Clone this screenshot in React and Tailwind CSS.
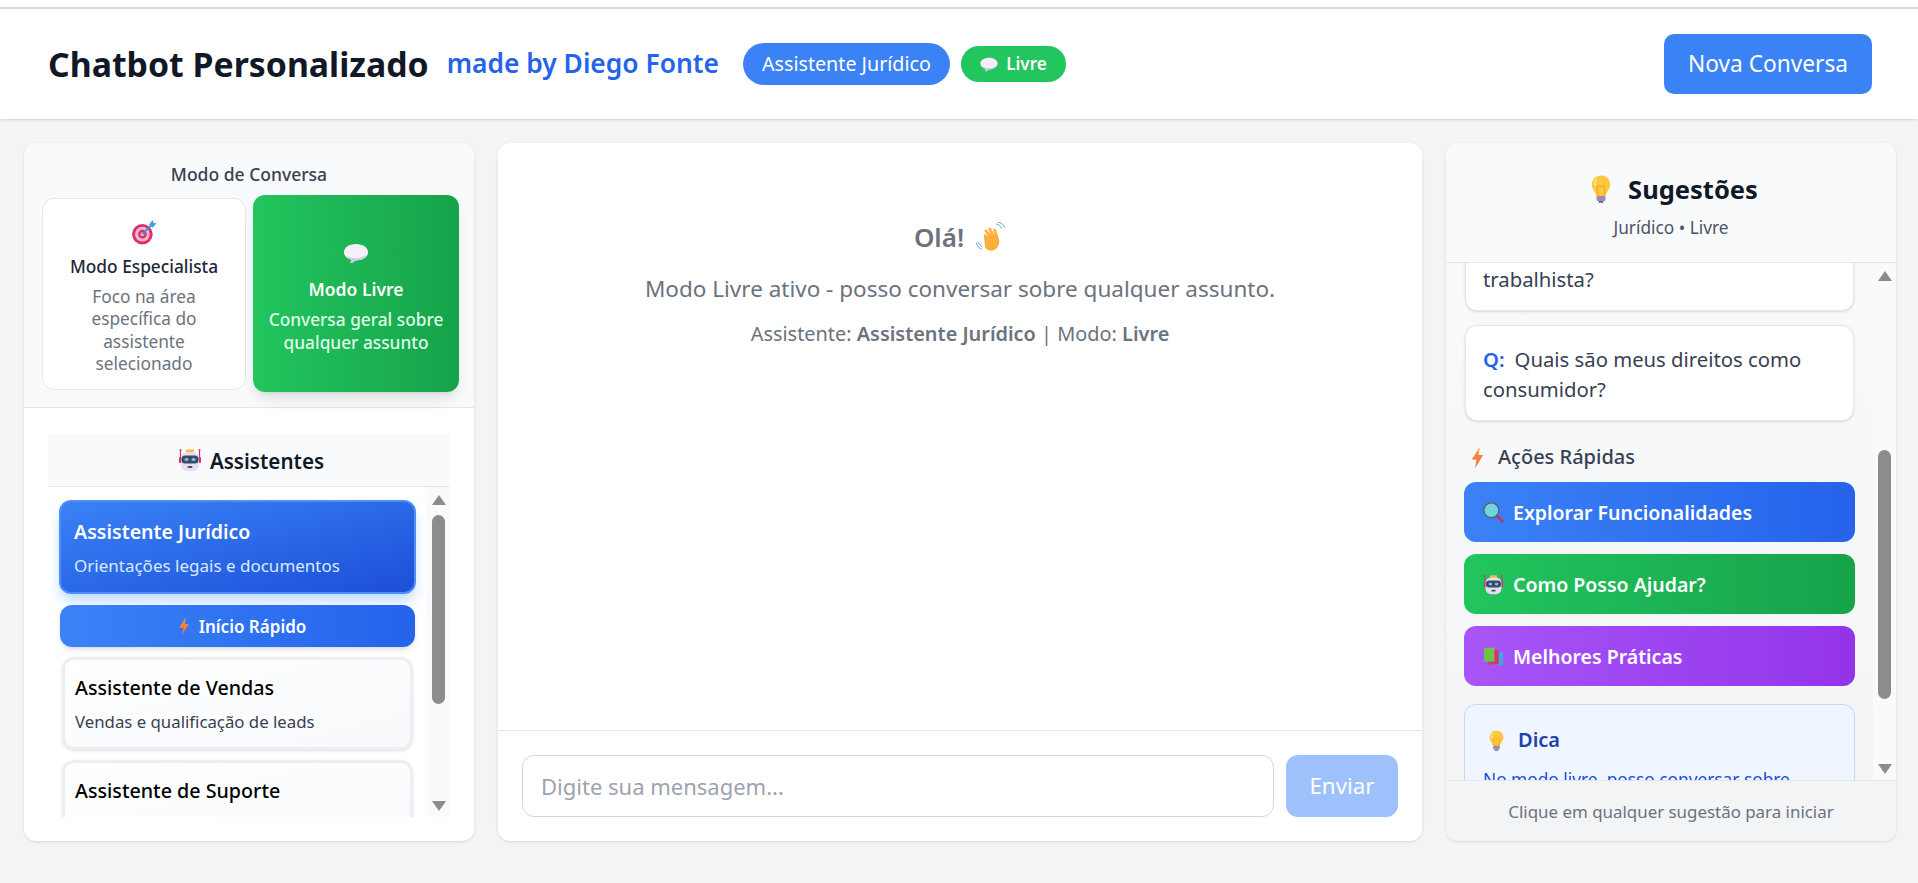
import React from 'react';

const FONT = "font-['Noto_Sans','Open_Sans',sans-serif]";

const Target = ({ className }) => (
  <svg viewBox="0 0 24 24" className={className}>
    <circle cx="10.5" cy="14" r="9.5" fill="#d6336c" />
    <circle cx="10.5" cy="14" r="6.8" fill="#f3b6cc" />
    <circle cx="10.5" cy="14" r="4" fill="#d6336c" />
    <circle cx="10.5" cy="14" r="1.8" fill="#f3b6cc" />
    <path d="M10.5 14 19 5.5" stroke="#3d8fd9" strokeWidth="1.6" />
    <path d="M16.5 5 20 1l.8 2.6L23.6 4 20 8z" fill="#3fa3ea" />
  </svg>
);

const Bubble = ({ className }) => (
  <svg viewBox="0 0 24 20" className={className}>
    <path d="M12 1C5.5 1 .5 4.4.5 8.8c0 3.3 2.8 6 6.8 7.1.3 1.200-.1 2.300-.9 3.100 2.200 0 4-1 5-2.400h.6c6.500 0 11.500-3.400 11.500-7.800S18.500 1 12 1z" fill="#f4eff8" />
    <path d="M3 12c3 3 12 4.500 19-.5-2 3.500-6 5-10 5-1 1.400-3 2.400-5.500 2.400.8-.8 1.200-1.900.9-3.100C5.500 15.300 4 14 3 12z" fill="#d3c3e6" />
  </svg>
);

const Robot = ({ className }) => (
  <svg viewBox="0 0 24 24" className={className}>
    <path d="M2.500 2v8M21.500 2v8" stroke="#d6336c" strokeWidth="1.200" />
    <circle cx="2.500" cy="2" r="1" fill="#d6336c" />
    <circle cx="21.500" cy="2" r="1" fill="#d6336c" />
    <rect x="8" y="1.500" width="8" height="3" rx="1" fill="#f5b83d" />
    <rect x="1" y="9" width="3" height="6" rx="1" fill="#d6336c" />
    <rect x="20" y="9" width="3" height="6" rx="1" fill="#d6336c" />
    <rect x="3" y="4" width="18" height="19" rx="6" fill="#eadcf0" />
    <rect x="3.500" y="7.500" width="17" height="8" rx="3.500" fill="#3a4a63" />
    <rect x="6.500" y="10" width="4" height="3" rx="1.500" fill="#63c3f5" />
    <rect x="13.500" y="10" width="4" height="3" rx="1.500" fill="#63c3f5" />
    <rect x="9.500" y="18" width="5" height="2" rx="1" fill="#4b5563" />
  </svg>
);

const Bolt = ({ className }) => (
  <svg viewBox="0 0 12 22" className={className}>
    <defs>
      <linearGradient id="bolt" x1="0" y1="0" x2="0" y2="1">
        <stop offset="0" stopColor="#f9a03c" />
        <stop offset="1" stopColor="#f0603a" />
      </linearGradient>
    </defs>
    <path d="M8.500 0 0 13h5L3.500 22 12 8.500H7z" fill="url(#bolt)" />
  </svg>
);

const Bulb = ({ className }) => (
  <svg viewBox="0 0 20 28" className={className}>
    <path d="M10 .5C4.700.5.800 4.400.800 9.500c0 5 3.700 6.800 4.700 12h9c1-5.200 4.700-7 4.700-12C19.200 4.400 15.300.5 10 .5z" fill="#fdc83f" />
    <path d="M5.500 3.500c-2 2-2.500 5-1 7" stroke="#ffe79a" strokeWidth="1.500" fill="none" />
    <path d="M7 21 6 12l2-1.500L10 12l2-1.500 2 1.500-1 9" stroke="#e59a1c" strokeWidth=".8" fill="none" />
    <rect x="5.500" y="21" width="9" height="5" rx="1.500" fill="#9d8bb5" />
    <rect x="7.500" y="26" width="5" height="1.800" rx=".9" fill="#6d5c85" />
  </svg>
);

const Wave = ({ className }) => (
  <svg viewBox="0 0 30 30" className={className}>
    <path d="M8 14.500c-1-1.500 1-3 2.300-1.600L13 16 8.800 9.500c-1-1.600 1.200-3 2.300-1.500l4 5.500-2.600-6c-.8-1.700 1.500-2.800 2.500-1.200l3.600 6.700-1.200-4.500c-.4-1.700 2-2.300 2.600-.7l2.700 8.500c1.300 4.500.2 8-2.700 10.500-4 3.400-8.500 2-11-1.500z" fill="#fbb03b" />
    <path d="M20 2c2.500.3 4.500 2 5.500 4.500M22 0c3 .5 5.500 2.500 6.500 5.500M2.500 20c.7 2.200 2 3.800 4 5M0 20.500c.8 3 3 5.500 5.500 6.500" stroke="#5aa5d6" strokeWidth="1" fill="none" />
  </svg>
);

const Magnifier = ({ className }) => (
  <svg viewBox="0 0 24 24" className={className}>
    <path d="M15 15l7 7" stroke="#b5386f" strokeWidth="3.500" strokeLinecap="round" />
    <circle cx="9.500" cy="9.500" r="8.500" fill="#6fd6e0" stroke="#556070" strokeWidth="1.500" />
  </svg>
);

const Books = ({ className }) => (
  <svg viewBox="0 0 24 24" className={className}>
    <rect x="12" y="7" width="11" height="15" fill="#3fa3ea" />
    <rect x="6" y="5" width="12" height="16" fill="#d6336c" />
    <rect x="1" y="2" width="12" height="16" fill="#6cc24a" />
  </svg>
);

const ScrollTrack = ({ thumbClass, upClass, downClass }) => (
  <div className="absolute top-0 right-0 bottom-0 w-[23px] bg-[#fafafa]">
    <div className={`absolute left-[5px] w-[13px] rounded-full bg-[#8c8c8c] ${thumbClass}`} />
    <div className={`absolute left-[5px] w-0 h-0 border-x-[7px] border-x-transparent border-b-[10px] border-b-[#8c8c8c] ${upClass}`} />
    <div className={`absolute left-[5px] w-0 h-0 border-x-[7px] border-x-transparent border-t-[10px] border-t-[#8c8c8c] ${downClass}`} />
  </div>
);

const AssistantCard = ({ title, desc }) => (
  <div className="mx-[3px] h-[93px] shrink-0 rounded-[12px] border-[3px] border-[#eceef1] bg-linear-to-br from-white to-[#f8f9fb] px-[10px] pt-[13px] shadow-sm">
    <div className="text-[19.700px] leading-[30px] font-medium text-black">{title}</div>
    <div className="mt-[6px] text-[16.800px] leading-[26px] text-[#374151]">{desc}</div>
  </div>
);

const ActionButton = ({ icon, label, colors }) => (
  <button type="button" className={`flex h-[60px] w-full items-center gap-[9px] rounded-[12px] pl-[19px] text-[19.500px] font-semibold text-white ${colors}`}>
    {icon}
    <span className="mt-[2px]">{label}</span>
  </button>
);

const QuestionCard = ({ className, children }) => (
  <div className={`h-[96px] rounded-[12px] border border-[#e5e7eb] bg-white px-[17px] pt-[18px] text-[20.300px] leading-[30px] text-[#374151] shadow-sm ${className}`}>
    <span className="mr-[10px] font-semibold text-[#2563eb]">Q:</span>
    {children}
  </div>
);

const App = () => {
  return (
    <div className={`flex h-[883px] flex-col overflow-hidden bg-[#f3f4f6] ${FONT}`}>
      <div className="h-[9px] shrink-0 border-b-2 border-[#dcdde0] bg-white" />

      <header className="flex h-[110px] shrink-0 items-center bg-white pr-[46px] pl-[48px] shadow-sm">
        <h1 className="text-[33.800px] font-bold text-[#111827]">Chatbot Personalizado</h1>
        <span className="ml-[18px] text-[26.400px] font-semibold text-[#2563eb]">made by Diego Fonte</span>
        <span className="ml-[24px] flex h-[42px] w-[207px] items-center justify-center rounded-full bg-[#3b82f6] text-[19.700px] text-white">
          Assistente Jurídico
        </span>
        <span className="ml-[11px] flex h-[36px] w-[105px] items-center justify-center gap-[8px] rounded-full bg-[#22c55e] text-[17px] font-semibold text-white">
          <Bubble className="h-[15px] w-[18px]" />
          Livre
        </span>
        <button type="button" className="ml-auto h-[60px] w-[208px] rounded-[10px] bg-[#3b82f6] text-[22.700px] text-white">
          Nova Conversa
        </button>
      </header>

      <main className="mt-[24px] flex h-[698px] gap-6 pr-[22px] pl-6">
        <aside className="flex w-[450px] flex-col overflow-hidden rounded-[12px] bg-white shadow-sm">
          <section className="h-[265px] shrink-0 border-b border-[#e5e7eb] bg-[#f9fafb] pt-[19px]">
            <div className="text-center text-[17.500px] leading-[24px] font-medium text-[#374151]">Modo de Conversa</div>
            <div className="mt-[9px] flex items-center pr-[15px] pl-[18px]">
              <div className="flex h-[192px] w-[204px] flex-col items-center rounded-[12px] border border-[#e5e7eb] bg-white pt-[20px] text-center">
                <Target className="h-[26px] w-[26px]" />
                <div className="mt-[9px] text-[17.300px] leading-[26px] font-medium text-[#1f2937]">Modo Especialista</div>
                <div className="mt-[6px] w-[170px] text-[17.300px] leading-[22.500px] text-[#6b7280]">
                  Foco na área específica do assistente selecionado
                </div>
              </div>
              <div className="ml-[7px] flex h-[197px] w-[206px] flex-col items-center rounded-[12px] bg-linear-to-r from-[#22c55e] to-[#16a34a] pt-[48px] text-center shadow-lg">
                <Bubble className="h-[21px] w-[26px]" />
                <div className="mt-[12px] text-[17.500px] leading-[26px] font-semibold text-white">Modo Livre</div>
                <div className="mt-[6px] text-[17.300px] leading-[23px] font-medium text-[#dcfce7]">
                  Conversa geral sobre qualquer assunto
                </div>
              </div>
            </div>
          </section>

          <section className="mx-auto mt-[25px] flex h-[384px] w-[402px] flex-col overflow-hidden">
            <div className="flex h-[54px] shrink-0 items-center justify-center gap-[8px] border-b border-[#e5e7eb] bg-[#f9fafb] pl-[4px] text-[20.600px] font-semibold text-[#111827]">
              <Robot className="h-[24px] w-[24px]" />
              <span className="mt-[3px]">Assistentes</span>
            </div>
            <div className="relative flex-1 overflow-hidden">
              <div className="flex w-[379px] flex-col pt-[13px] pr-[11px] pl-[11px]">
                <div className="h-[94px] shrink-0 rounded-[12px] border-2 border-[#4d8ff7] bg-linear-to-br from-[#3b82f6] to-[#1d4ed8] px-[13px] pt-[15px] shadow-lg shadow-blue-200">
                  <div className="text-[19.600px] leading-[30px] font-semibold text-white">Assistente Jurídico</div>
                  <div className="mt-[6px] text-[17px] leading-[26px] text-[#dbeafe]">Orientações legais e documentos</div>
                </div>
                <button type="button" className="mx-px mt-[11px] flex h-[42px] shrink-0 items-center justify-center gap-[10px] rounded-[12px] bg-linear-to-r from-[#3b82f6] to-[#2563eb] pl-[10px] text-[17px] font-semibold text-white shadow-md">
                  <Bolt className="h-[18px] w-[10px]" />
                  <span className="mt-[2px]">Início Rápido</span>
                </button>
                <div className="mt-[10px] flex flex-col gap-[10px]">
                  <AssistantCard title="Assistente de Vendas" desc="Vendas e qualificação de leads" />
                  <AssistantCard title="Assistente de Suporte" desc="Suporte técnico e atendimento" />
                </div>
              </div>
              <ScrollTrack thumbClass="top-[28px] h-[189px]" upClass="top-[8px]" downClass="top-[314px]" />
            </div>
          </section>
        </aside>

        <section className="flex flex-1 flex-col overflow-hidden rounded-[12px] bg-white shadow-sm">
          <div className="flex-1 pt-[76px] text-center text-[#6b7280]">
            <div className="flex items-center justify-center gap-[12px] text-[26px] leading-[36px] font-semibold">
              Olá!
              <Wave className="h-[30px] w-[30px]" />
            </div>
            <p className="mt-[16px] text-[22.500px] leading-[36px]">Modo Livre ativo - posso conversar sobre qualquer assunto.</p>
            <p className="mt-[12px] text-[19.900px] leading-[30px]">
              Assistente: <strong className="font-semibold">Assistente Jurídico</strong> | Modo: <strong className="font-semibold">Livre</strong>
            </p>
          </div>
          <div className="flex h-[111px] shrink-0 gap-[12px] border-t border-[#e5e7eb] pt-[24px] pr-[24px] pl-[24px]">
            <input
              type="text"
              placeholder="Digite sua mensagem..."
              className="h-[62px] flex-1 rounded-[12px] border border-[#d1d5db] px-[18px] text-[22px] placeholder:text-[#9ca3af]"
            />
            <button type="button" className="h-[62px] w-[112px] rounded-[12px] bg-[#9ec1fb] text-[22.400px] text-white">Enviar</button>
          </div>
        </section>

        <aside className="flex w-[450px] flex-col overflow-hidden rounded-[12px] bg-[#f3f4f6] shadow-sm">
          <div className="flex h-[120px] shrink-0 flex-col items-center border-b border-[#e5e7eb] bg-[#f9fafb] pt-[27px]">
            <div className="flex items-center gap-[17px] pl-[7px] text-[25.500px] leading-[38px] font-bold text-[#111827]">
              <Bulb className="h-[28px] w-[20px]" />
              Sugestões
            </div>
            <div className="mt-[7px] text-[17.300px] leading-[26px] text-[#4b5563]">Jurídico • Livre</div>
          </div>

          <div className="relative flex-1 overflow-hidden bg-linear-to-b from-[#f9fafb] to-[#f3f4f6]">
            <div className="-mt-[48px] w-[427px] pr-[18px] pl-[18px]">
              <div className="px-px">
                <QuestionCard>Como funciona uma rescisão trabalhista?</QuestionCard>
                <QuestionCard className="mt-[14px]">Quais são meus direitos como consumidor?</QuestionCard>
              </div>
              <div className="mt-[21px] flex h-[30px] items-center gap-[14px] pl-[7px] text-[20px] font-medium text-[#374151]">
                <Bolt className="h-[21px] w-[13px]" />
                Ações Rápidas
              </div>
              <div className="mt-[10px] flex flex-col gap-[12px]">
                <ActionButton icon={<Magnifier className="h-[21px] w-[21px]" />} label="Explorar Funcionalidades" colors="bg-linear-to-r from-[#3b82f6] to-[#2563eb]" />
                <ActionButton icon={<Robot className="h-[21px] w-[21px]" />} label="Como Posso Ajudar?" colors="bg-linear-to-r from-[#22c55e] to-[#16a34a]" />
                <ActionButton icon={<Books className="h-[21px] w-[21px]" />} label="Melhores Práticas" colors="bg-linear-to-r from-[#a855f7] to-[#9333ea]" />
              </div>
              <div className="mt-[18px] h-[200px] rounded-[12px] border border-[#bfdbfe] bg-[#eff6ff] px-[18px] pt-[23px]">
                <div className="flex h-[24px] items-center gap-[14px] pl-[6px] text-[20px] font-semibold text-[#1e40af]">
                  <Bulb className="h-[21px] w-[15px]" />
                  Dica
                </div>
                <p className="mt-[15px] text-[17.300px] leading-[26px] text-[#1d4ed8]">No modo livre, posso conversar sobre qualquer assunto que você quiser.</p>
              </div>
            </div>
            <ScrollTrack thumbClass="top-[187px] h-[249px]" upClass="top-[8px]" downClass="top-[501px]" />
          </div>

          <div className="h-[61px] shrink-0 border-t border-[#e5e7eb] bg-[#f3f4f6] pt-[17px] text-center text-[16.900px] leading-[28px] text-[#6b7280]">
            Clique em qualquer sugestão para iniciar
          </div>
        </aside>
      </main>
    </div>
  );
};

export default App;
